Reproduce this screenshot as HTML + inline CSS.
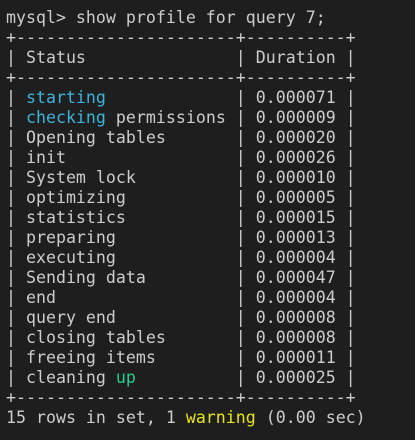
<!DOCTYPE html>
<html><head><style>
html,body{margin:0;padding:0;background:#1e1e1e;width:415px;height:440px;overflow:hidden}
pre{margin:0;padding:8px 0 0 6px;font-family:"DejaVu Sans Mono","Liberation Mono",monospace;font-size:16.6px;line-height:20px;color:#cccccc}
.c{color:#3bb4dc}.g{color:#23d18b}.y{color:#e5e510}
</style></head><body><pre>mysql&gt; show profile for query 7;
+----------------------+----------+
| Status               | Duration |
+----------------------+----------+
| <span class="c">starting</span>             | 0.000071 |
| <span class="c">checking</span> permissions | 0.000009 |
| Opening tables       | 0.000020 |
| init                 | 0.000026 |
| System lock          | 0.000010 |
| optimizing           | 0.000005 |
| statistics           | 0.000015 |
| preparing            | 0.000013 |
| executing            | 0.000004 |
| Sending data         | 0.000047 |
| end                  | 0.000004 |
| query end            | 0.000008 |
| closing tables       | 0.000008 |
| freeing items        | 0.000011 |
| cleaning <span class="g">up</span>          | 0.000025 |
+----------------------+----------+
15 rows in set, 1 <span class="y">warning</span> (0.00 sec)
</pre></body></html>
